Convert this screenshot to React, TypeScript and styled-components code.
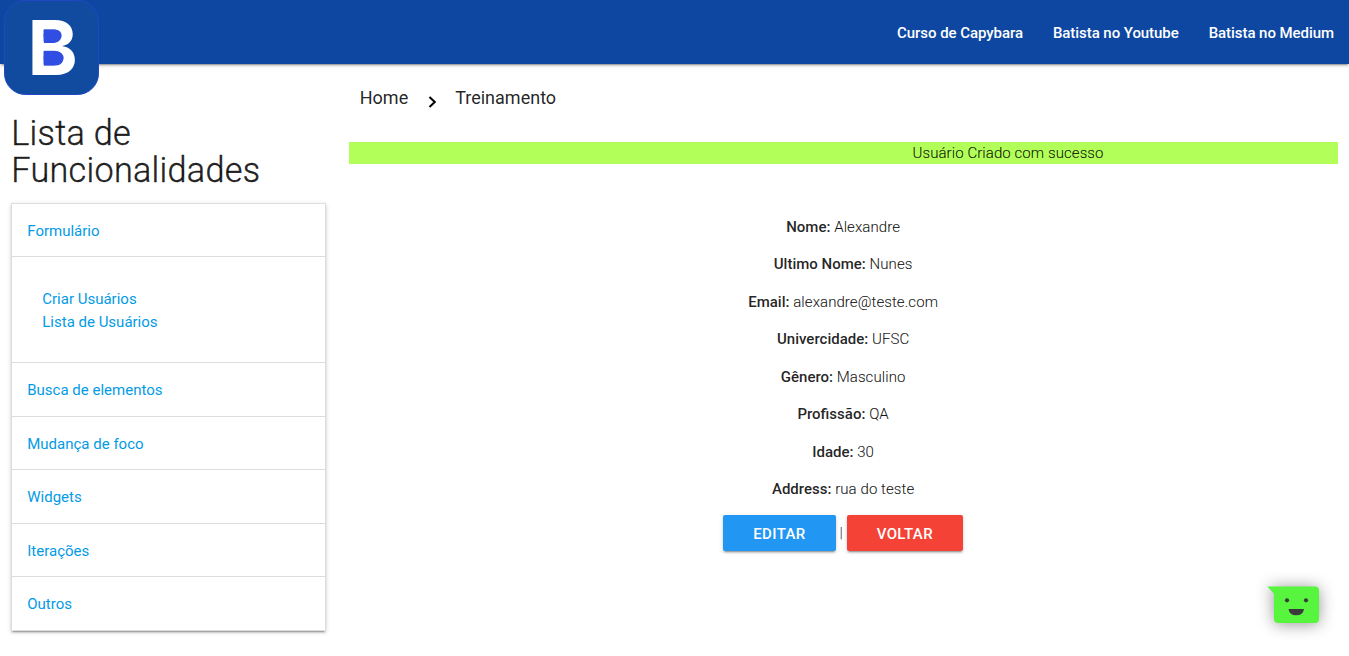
import React from 'react';
import styled, { createGlobalStyle } from 'styled-components';

const GlobalStyle = createGlobalStyle`
  *, *::before, *::after { box-sizing: border-box; }
  html { font-size: 15px; }
  body {
    margin: 0;
    background: #fff;
    color: rgba(0, 0, 0, 0.87);
    font-family: Roboto, 'Liberation Sans', sans-serif;
    font-weight: 400;
    line-height: 1.5;
    overflow: hidden;
  }
  a { color: #039be5; text-decoration: none; }
`;

const shadow =
  '0 2px 2px 0 rgba(0,0,0,0.14), 0 1px 5px 0 rgba(0,0,0,0.12), 0 3px 1px -2px rgba(0,0,0,0.2)';

const Page = styled.div`
  position: relative;
  min-height: 656px;
`;

const Nav = styled.nav`
  display: flex;
  justify-content: flex-end;
  height: 64px;
  background: #0d47a1;
  box-shadow: ${shadow};
`;

const NavLink = styled.a`
  padding: 0 15px;
  line-height: 66px;
  font-weight: 500;
  letter-spacing: -0.06px;
  color: #fff;
`;

const Logo = styled.svg`
  position: absolute;
  left: 4px;
  top: 0;
`;

const Columns = styled.div`
  display: grid;
  grid-template-columns: 25% 75%;
`;

const Sidebar = styled.aside`
  padding: 50.8px 11.25px 0;
`;

const Title = styled.h4`
  margin: 0 0 12.86px;
  font-size: 34.2px;
  line-height: 110%;
  font-weight: 300;
  letter-spacing: 0.29px;
  -webkit-text-stroke: 0.4px currentColor;
`;

const Menu = styled.ul`
  margin: 0;
  padding: 0;
  list-style: none;
  border: 1px solid #ddd;
  border-bottom: 0;
  box-shadow: ${shadow};
`;

const MenuItem = styled.li`
  padding: 15.7px 15px 14.3px;
  border-bottom: 1px solid #ddd;
`;

const SubMenu = styled.li`
  display: flex;
  flex-direction: column;
  padding: 31px 30px 29px;
  border-bottom: 1px solid #ddd;
`;

const Main = styled.main`
  padding: 0 11.25px;
`;

const Breadcrumb = styled.div`
  display: flex;
  align-items: center;
  height: 67px;
  margin-bottom: 10.5px;
  padding-left: 11.25px;
  font-size: 18px;
`;

const Chevron = styled.svg`
  margin: 9px 18px 0 20px;
`;

const Notice = styled.div`
  height: 22.5px;
  padding-left: 329.75px;
  background: #b2ff59;
  font-weight: 300;
  letter-spacing: 0.08px;
  -webkit-text-stroke: 0.15px currentColor;
  text-align: center;
`;

const Details = styled.div`
  padding-top: 51.5px;
  text-align: center;
`;

const Field = styled.p`
  margin: 0 0 15px;
  font-weight: 300;
  letter-spacing: 0.08px;
  -webkit-text-stroke: 0.15px currentColor;
`;

const Label = styled.strong`
  font-weight: 500;
  letter-spacing: 0;
  -webkit-text-stroke: 0;
`;

const Actions = styled.div`
  display: flex;
  justify-content: center;
  align-items: center;
  margin-top: -15.5px;
  padding-top: 15px;
  font-weight: 300;
`;

const Button = styled.a<{ $color: string }>`
  height: 36px;
  padding: 0 30px;
  border-radius: 2px;
  background: ${(p) => p.$color};
  color: #fff;
  font-weight: 500;
  line-height: 38.5px;
  letter-spacing: 0.38px;
  text-transform: uppercase;
  box-shadow: ${shadow};
`;

const Divider = styled.span`
  width: 11px;
  text-align: center;
`;

const Chat = styled.svg`
  position: absolute;
  left: 1249px;
  top: 566px;
  overflow: visible;
  filter: drop-shadow(0 1px 8px rgba(0, 0, 0, 0.42));
`;

const fields = [
  ['Nome:', 'Alexandre'],
  ['Ultimo Nome:', 'Nunes'],
  ['Email:', 'alexandre@teste.com'],
  ['Univercidade:', 'UFSC'],
  ['Gênero:', 'Masculino'],
  ['Profissão:', 'QA'],
  ['Idade:', '30'],
  ['Address:', 'rua do teste'],
];

const sections = ['Busca de elementos', 'Mudança de foco', 'Widgets', 'Iterações', 'Outros'];

export default function App() {
  return (
    <Page>
      <GlobalStyle />
      <Nav>
        <NavLink>Curso de Capybara</NavLink>
        <NavLink>Batista no Youtube</NavLink>
        <NavLink>Batista no Medium</NavLink>
      </Nav>
      <Logo width="95" height="95" viewBox="0 0 95 95">
        <rect x="0.5" y="0.5" width="94" height="94" rx="21" fill="#114ba0" stroke="#2148c4" />
        <rect x="38" y="26" width="22" height="42" fill="#304ee2" />
        <text
          transform="translate(23.6 74.8)"
          fontFamily="Inter, sans-serif"
          fontWeight="700"
          fontSize="76"
          fill="#fff"
        >
          B
        </text>
        <rect x="39.6" y="30" width="18" height="11" rx="5.5" fill="#304ee2" />
        <rect x="39.6" y="51.5" width="20" height="13" rx="6.5" fill="#304ee2" />
        <rect x="39.6" y="30" width="8" height="11" fill="#304ee2" />
        <rect x="39.6" y="51.5" width="8" height="13" fill="#304ee2" />
      </Logo>
      <Columns>
        <Sidebar>
          <Title>Lista de Funcionalidades</Title>
          <Menu>
            <MenuItem><a>Formulário</a></MenuItem>
            <SubMenu>
              <a>Criar Usuários</a>
              <a>Lista de Usuários</a>
            </SubMenu>
            {sections.map((s) => (
              <MenuItem key={s}><a>{s}</a></MenuItem>
            ))}
          </Menu>
        </Sidebar>
        <Main>
          <Breadcrumb>
            <span>Home</span>
            <Chevron width="9" height="12" viewBox="0 0 9 12" fill="none" stroke="#000" strokeWidth="2">
              <path d="M1.5 1 L6.8 6 L1.5 11" />
            </Chevron>
            <span>Treinamento</span>
          </Breadcrumb>
          <Notice>Usuário Criado com sucesso</Notice>
          <Details>
            {fields.map(([label, value]) => (
              <Field key={label}>
                <Label>{label}</Label> {value}
              </Field>
            ))}
            <Actions>
              <Button $color="#2196f3">Editar</Button>
              <Divider>|</Divider>
              <Button $color="#f44336">Voltar</Button>
            </Actions>
          </Details>
        </Main>
      </Columns>
      <Chat width="80" height="70" viewBox="0 0 80 70">
        <path d="M18.5 20.5 H66 Q70 20.5 70 24.5 V53 Q70 57 66 57 H29 Q25 57 25 53 V28 Z" fill="#57f53d" />
        <circle cx="38" cy="34.3" r="2.1" fill="#3a3a3a" />
        <circle cx="57" cy="34.3" r="2.1" fill="#3a3a3a" />
        <path d="M39.5 43 H55 Q54 49.3 47.2 49.3 Q40.5 49.3 39.5 43 Z" fill="#3a3a3a" />
      </Chat>
    </Page>
  );
}
